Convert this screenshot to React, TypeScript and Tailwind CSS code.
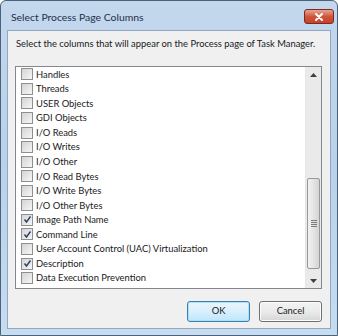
import React from "react";

const items: [string, boolean][] = [
  ["Handles", false],
  ["Threads", false],
  ["USER Objects", false],
  ["GDI Objects", false],
  ["I/O Reads", false],
  ["I/O Writes", false],
  ["I/O Other", false],
  ["I/O Read Bytes", false],
  ["I/O Write Bytes", false],
  ["I/O Other Bytes", false],
  ["Image Path Name", true],
  ["Command Line", true],
  ["User Account Control (UAC) Virtualization", false],
  ["Description", true],
  ["Data Execution Prevention", false],
];

function Check({ on }: { on: boolean }) {
  return (
    <div className="w-[12px] h-[12px] border border-[#8e8f8f] bg-gradient-to-br from-[#d4d4d4] to-[#f6f6f6] flex items-center justify-center shrink-0">
      {on && (
        <svg width="9" height="9" viewBox="0 0 9 9">
          <path d="M1.5 4.5 L3.5 7 L7.5 1.5" fill="none" stroke="#2b3d6b" strokeWidth="1.4" />
        </svg>
      )}
    </div>
  );
}

export default function App() {
  return (
    <div
      className="w-[338px] h-[336px] relative overflow-hidden rounded-t-[6px] border border-[#4d6178] bg-gradient-to-b from-[#c3d7ed] via-[#b9d1ea] to-[#c6dcf1] flex flex-col"
      style={{ fontFamily: 'Lato, "Open Sans", sans-serif' }}
    >
      {/* title bar */}
      <div className="h-[29px] flex pl-[10px] pr-[3px] shrink-0">
        <span className="mt-[10px] text-[10.4px] text-[#1e2f48] leading-[13px]">Select Process Page Columns</span>
        <div className="ml-auto mt-[8px] w-[30px] h-[15px] rounded-[3px] border border-[#7a2a20] bg-gradient-to-b from-[#e8a493] via-[#d0543a] to-[#c5432a] flex items-center justify-center">
          <svg width="10" height="8" viewBox="0 0 10 8">
            <path d="M2 1 L8 7 M8 1 L2 7" stroke="#ffffff" strokeWidth="2" strokeLinecap="round" />
          </svg>
        </div>
      </div>
      {/* client */}
      <div className="mx-[6px] mb-[6px] flex-1 bg-[#f0f0f0] border border-[#91a7c2] flex flex-col px-[7px]">
        <div className="pt-[7px] h-[27px] text-[9.4px] text-[#1a1a1a] leading-[12px] pl-[1px] whitespace-nowrap">
          Select the columns that will appear on the Process page of Task Manager.
        </div>
        <div className="mt-[8px] h-[223px] w-[307px] border border-[#828790] bg-white flex">
          <div className="flex-1 flex flex-col pl-[5px]">
            {items.map(([label, on]) => (
              <div key={label} className="h-[14.57px] flex items-center gap-[3px]">
                <Check on={on} />
                <span className="text-[9.4px] text-[#1a1a1a] leading-none whitespace-nowrap">{label}</span>
              </div>
            ))}
          </div>
          {/* scrollbar */}
          <div className="w-[16px] bg-[#eaeaea] border-l border-[#e6e6e6] flex flex-col">
            <div className="h-[15px] flex items-center justify-center">
              <svg width="7" height="4" viewBox="0 0 7 4">
                <path d="M0 4 L3.5 0 L7 4 Z" fill="#404040" />
              </svg>
            </div>
            <div className="flex-1 flex flex-col">
              <div className="mt-[96px] h-[91px] mx-[1px] rounded-[2px] border border-[#989898] bg-gradient-to-r from-[#f2f2f2] via-[#e4e4e4] to-[#d4d4d4] flex items-center justify-center">
                <div className="flex flex-col gap-[1px]">
                  <div className="w-[6px] h-[1px] bg-[#7a7a7a]" />
                  <div className="w-[6px] h-[1px] bg-[#7a7a7a]" />
                  <div className="w-[6px] h-[1px] bg-[#7a7a7a]" />
                  <div className="w-[6px] h-[1px] bg-[#7a7a7a]" />
                </div>
              </div>
            </div>
            <div className="h-[15px] flex items-center justify-center">
              <svg width="7" height="4" viewBox="0 0 7 4">
                <path d="M0 0 L3.5 4 L7 0 Z" fill="#404040" />
              </svg>
            </div>
          </div>
        </div>
        <div className="mt-[12px] flex justify-end gap-[9px] pr-[1px]">
          <button className="w-[63px] h-[21px] rounded-[3px] border border-[#3c7fb1] bg-gradient-to-b from-[#eaf6fd] via-[#d9f0fc] to-[#bee6fd] text-[9.4px] text-[#1a1a1a] shadow-[inset_0_0_0_1px_#aee0f7]">
            OK
          </button>
          <button className="w-[63px] h-[21px] rounded-[3px] border border-[#707070] bg-gradient-to-b from-[#f2f2f2] via-[#ebebeb] to-[#d6d6d6] text-[9.4px] text-[#1a1a1a] shadow-[inset_0_0_0_1px_#fcfcfc]">
            Cancel
          </button>
        </div>
      </div>
    </div>
  );
}
